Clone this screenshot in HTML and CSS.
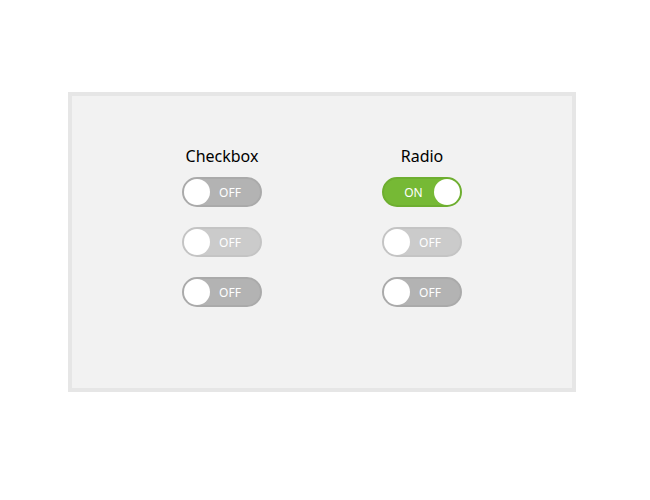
FILE: index.html
```html
<!DOCTYPE html>
<html>
<head>
<meta charset="utf-8">
<link rel="stylesheet" href="styles.css">
</head>
<body>
<div class="panel">
  <div class="col">
    <div class="label">Checkbox</div>
    <div class="toggle off"><span class="knob"></span><span class="txt">OFF</span></div>
    <div class="toggle off disabled"><span class="knob"></span><span class="txt">OFF</span></div>
    <div class="toggle off"><span class="knob"></span><span class="txt">OFF</span></div>
  </div>
  <div class="col">
    <div class="label">Radio</div>
    <div class="toggle on"><span class="txt">ON</span><span class="knob"></span></div>
    <div class="toggle off disabled"><span class="knob"></span><span class="txt">OFF</span></div>
    <div class="toggle off"><span class="knob"></span><span class="txt">OFF</span></div>
  </div>
</div>
</body>
</html>
```
FILE: styles.css
```css
html, body {
  margin: 0;
  padding: 0;
  background: #fff;
}
body {
  font-family: "Noto Sans", "Open Sans", sans-serif;
}
.panel {
  margin: 92px 0 0 68px;
  width: 500px;
  height: 243px;
  border: 4px solid #e6e6e6;
  background: #f2f2f2;
  display: flex;
  justify-content: center;
  gap: 80px;
  padding-top: 49px;
  box-sizing: content-box;
}
.col {
  width: 120px;
  display: flex;
  flex-direction: column;
  align-items: center;
  gap: 20px;
}
.label {
  font-size: 16px;
  line-height: 22px;
  color: #000;
  margin-bottom: -10px;
}
.toggle {
  width: 80px;
  height: 30px;
  box-sizing: border-box;
  border: 2px solid #aaa;
  border-radius: 15px;
  background: #b3b3b3;
  display: flex;
  align-items: center;
  color: #fff;
  font-size: 12px;
}
.toggle.disabled {
  background: #cbcbcb;
  border-color: #c4c4c4;
}
.toggle.on {
  background: #76b935;
  border-color: #6eae30;
}
.knob {
  width: 26px;
  height: 26px;
  border-radius: 50%;
  background: #fff;
  flex: none;
}
.txt {
  flex: 1;
  text-align: center;
  padding-right: 10px;
}
.on .txt {
  padding-right: 0;
  padding-left: 9px;
}
```
